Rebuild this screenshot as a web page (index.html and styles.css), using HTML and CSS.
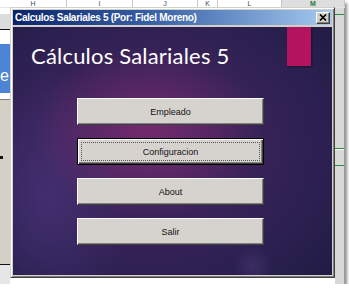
FILE: index.html
```html
<!DOCTYPE html>
<html lang="es">
<head>
    <meta charset="UTF-8">
    <meta name="viewport" content="width=device-width, initial-scale=1.0">
    <title>Calculos Salariales 5</title>
    <link rel="stylesheet" href="styles.css">
</head>
<body>
    <div class="shot">
        <div class="sheet">
            <div class="cols">
                <div class="col col-h"><span>H</span></div>
                <div class="col col-i"><span>I</span></div>
                <div class="col col-j"><span>J</span></div>
                <div class="col col-k"><span>K</span></div>
                <div class="col col-l"><span>L</span></div>
                <div class="col col-m"><span>M</span></div>
            </div>
            <div class="sheet-row">
                <div class="left-strip">
                    <div class="ls-white"></div>
                    <div class="ls-bar"></div>
                    <div class="ls-white2"></div>
                    <div class="ls-blue"><span>e</span></div>
                    <div class="ls-white3"></div>
                    <div class="ls-gray"><i class="mark"></i></div>
                    <div class="ls-foot"></div>
                </div>
                <div class="middle"></div>
                <div class="right-strip">
                    <div class="green g1"></div>
                    <div class="green g2"></div>
                    <div class="green g3"></div>
                </div>
            </div>
        </div>

        <div class="dialog">
            <div class="titlebar">
                <span class="title-text">Calculos Salariales 5 (Por: Fidel Moreno)</span>
                <button class="close">
                    <svg width="8" height="7" viewBox="0 0 8 7"><path d="M1 0.5 L7 6.5 M7 0.5 L1 6.5" stroke="#000" stroke-width="1.7" fill="none"/></svg>
                </button>
            </div>
            <div class="client">
                <div class="header">
                    <h1 class="app-title">Cálculos Salariales 5</h1>
                    <div class="accent"></div>
                </div>
                <div class="menu">
                    <button class="btn">Empleado</button>
                    <button class="btn default"><span class="focus">Configuracion</span></button>
                    <button class="btn">About</button>
                    <button class="btn">Salir</button>
                </div>
            </div>
        </div>
    </div>
</body>
</html>
```

FILE: styles.css
```css
* { box-sizing: border-box; margin: 0; padding: 0; }
body { background: #fff; font-family: "Liberation Sans", Arial, sans-serif; }

.shot {
    position: relative;
    width: 345px;
    height: 284px;
    overflow: hidden;
    background: #e2e2e2;
    box-shadow: 2px 3px 3px rgba(0,0,0,0.45);
}

/* spreadsheet behind the window */
.sheet { display: flex; flex-direction: column; height: 100%; }

.cols { display: flex; height: 8px; background: #fff; border-bottom: 1px solid #e6e6e6; }
.col {
    display: flex;
    justify-content: center;
    align-items: center;
    border-right: 1px solid #c9c9c9;
    color: #3c4b63;
    font-size: 7px;
}
.col span { line-height: 7px; }
.col-h { width: 67px; }
.col-i { width: 66px; }
.col-j { width: 65px; }
.col-k { width: 20px; }
.col-l { width: 64px; }
.col-m { width: 63px; background: #dedede; color: #1f7a3a; font-weight: bold; }

.sheet-row { display: flex; flex: 1; }

.left-strip { width: 10px; display: flex; flex-direction: column; }
.ls-white { height: 6px; background: #fff; }
.ls-bar { height: 16px; background: #dcdcdc; border-bottom: 1px solid #111; }
.ls-white2 { height: 14px; background: #fff; }
.ls-blue {
    height: 49px;
    background: #4c84d6;
    color: #fff;
    font-size: 16px;
    line-height: 20px;
    padding-top: 22px;
}
.ls-blue span { display: block; }
.ls-white3 { height: 7px; background: #fff; border-bottom: 1px solid #808080; }
.ls-gray { height: 165px; background: #d4d0c8; border-bottom: 1px solid #111; padding-top: 56px; }
.mark { display: block; width: 3px; height: 3px; background: #111; }
.ls-foot { flex: 1; background: #e6e6e6; }

.middle { flex: 1; background: #fff; }

.right-strip { width: 10px; background: #d8d8d8; border-right: 1px solid #9a9a9a; display: flex; flex-direction: column; }
.green { height: 1px; background: #2a8a4a; }
.g1 { margin-top: 6px; }
.g2 { margin-top: 133px; border-bottom: 1px solid #fff; height: 2px; }
.g3 { margin-top: 15px; }

/* the dialog window */
.dialog {
    position: absolute;
    left: 10px;
    top: 7px;
    width: 325px;
    height: 271px;
    display: flex;
    flex-direction: column;
    padding: 2px;
    background: #d4d0c8;
    border: 1px solid;
    border-color: #d4d0c8 #404040 #404040 #d4d0c8;
    box-shadow: inset 1px 1px #fff, inset -1px -1px #808080;
}

.titlebar {
    height: 15px;
    display: flex;
    align-items: center;
    justify-content: space-between;
    padding: 0 2px 0 2px;
    background: linear-gradient(to right, #0a246a, #3a63a8 45%, #a6caf0);
    margin-bottom: 2px;
}
.title-text {
    color: #fff;
    font-weight: bold;
    font-size: 10px;
    letter-spacing: -0.3px;
    white-space: nowrap;
}
.close {
    width: 14px;
    height: 12px;
    display: flex;
    align-items: center;
    justify-content: center;
    background: #d4d0c8;
    border: 1px solid;
    border-color: #fff #404040 #404040 #fff;
    box-shadow: inset -1px -1px #808080;
}

.client {
    flex: 1;
    display: flex;
    flex-direction: column;
    background:
        radial-gradient(ellipse 20px 20px at 240px 240px, rgba(90,70,140,0.35), transparent),
        radial-gradient(ellipse 115px 85px at 135px 105px, rgba(125,44,112,0.8), transparent),
        radial-gradient(ellipse 80px 130px at 35px 170px, rgba(72,52,122,0.7), transparent),
        radial-gradient(ellipse 230px 190px at 140px 120px, #4a2662, #2b2050 75%, #211c45);
}

.header { display: flex; justify-content: space-between; height: 71px; }
.app-title {
    padding: 15px 0 0 18px;
    font-family: Lato, "Open Sans", sans-serif;
    font-weight: 400;
    font-size: 22px;
    letter-spacing: 0.2px;
    color: #fff;
}
.accent {
    width: 24px;
    height: 39px;
    margin-right: 21px;
    background: #b3135f;
    box-shadow: 1px 1px 2px rgba(0,0,0,0.45);
}

.menu { display: flex; flex-direction: column; gap: 13px; padding-left: 64px; }

.btn {
    width: 187px;
    height: 27px;
    background: #d6d3ce;
    border: 1px solid;
    border-color: #fff #404040 #404040 #fff;
    box-shadow: inset -1px -1px #808080;
    font-family: "Liberation Sans", Arial, sans-serif;
    font-size: 9px;
    color: #111;
    display: flex;
    align-items: center;
    justify-content: center;
}
.btn.default {
    border: 1px solid #000;
    box-shadow: inset 1px 1px #fff, inset -1px -1px #404040, inset -2px -2px #808080;
    padding: 3px;
}
.focus {
    flex: 1;
    align-self: stretch;
    display: flex;
    align-items: center;
    justify-content: center;
    border: 1px dotted #555;
}
```
